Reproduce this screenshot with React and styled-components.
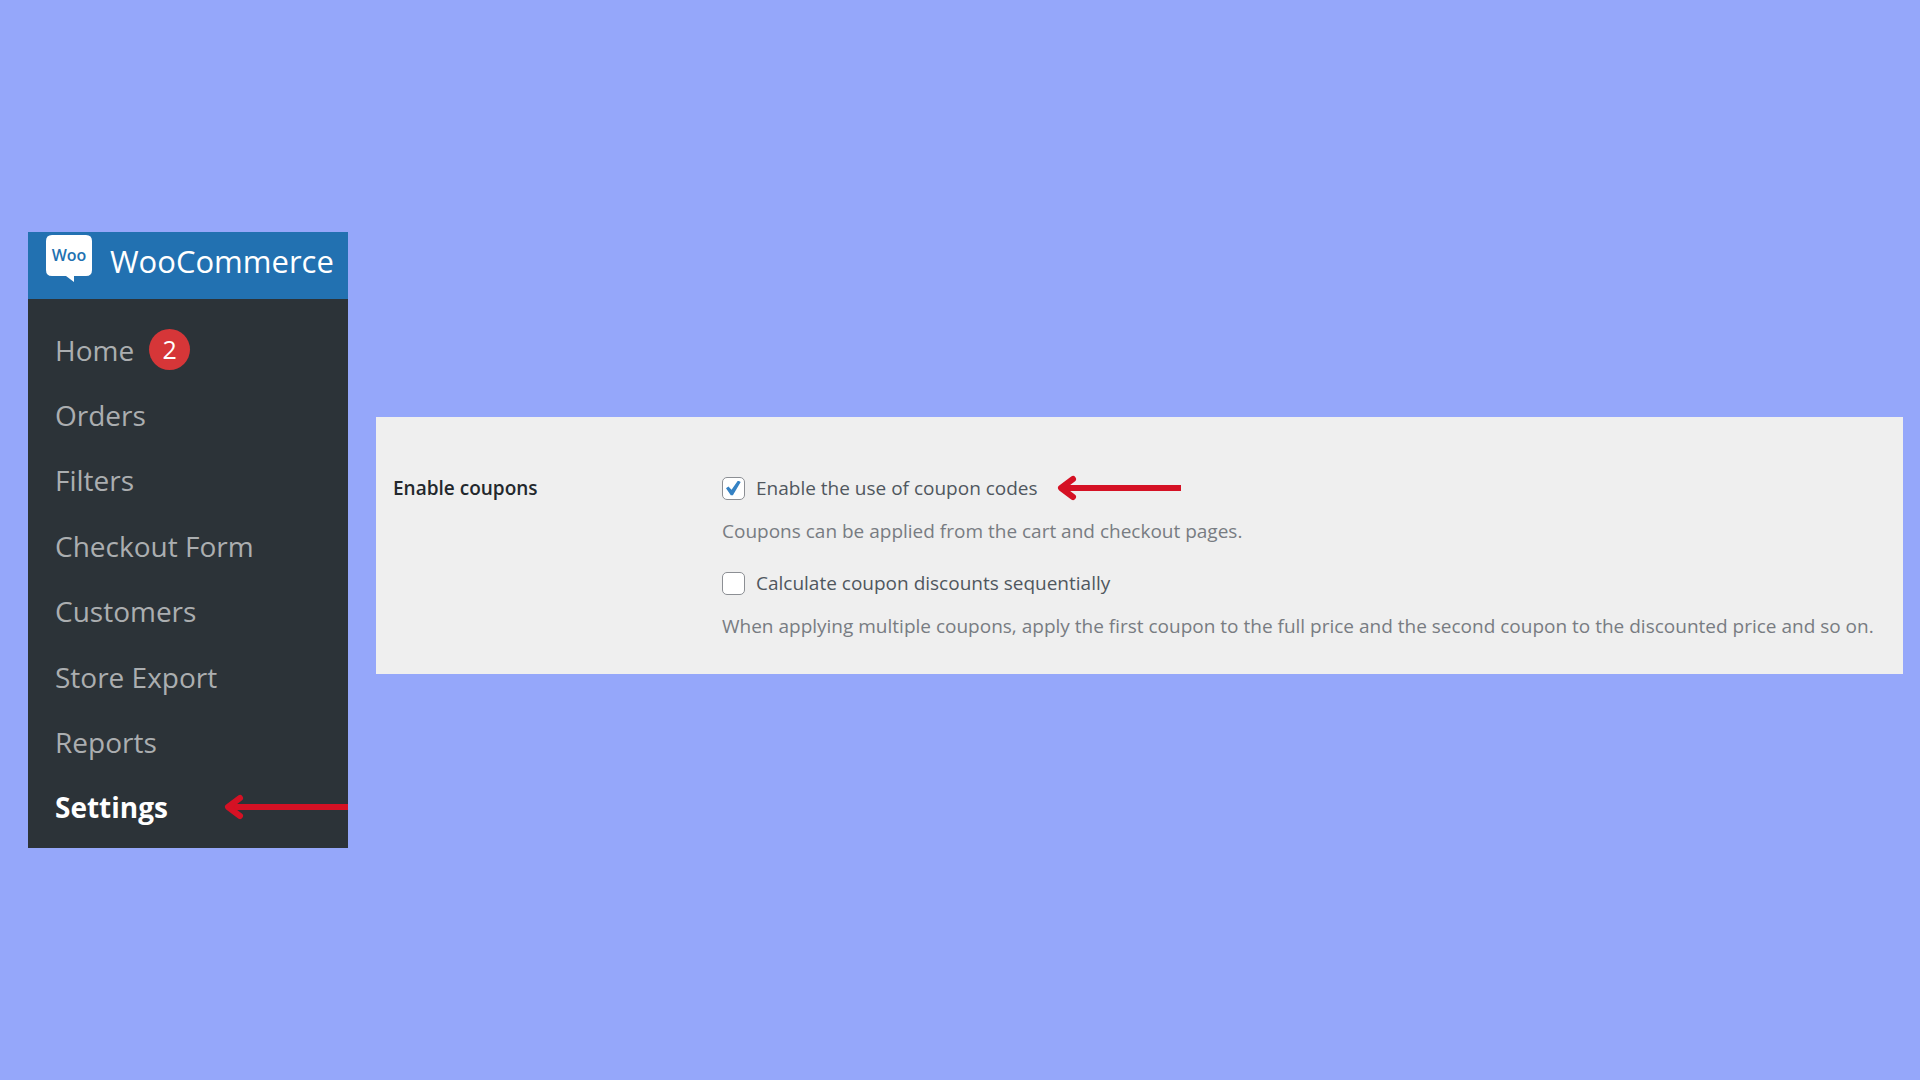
import React from "react";
import styled, { createGlobalStyle } from "styled-components";

const GlobalStyle = createGlobalStyle`
  *, *::before, *::after { box-sizing: border-box; }
  body {
    margin: 0;
    background: #95a7fa;
    font-family: "Segoe UI", "Open Sans", "Noto Sans", sans-serif;
  }
`;

const Page = styled.main`
  min-height: 100vh;
  display: flex;
  align-items: center;
  gap: 28px;
  padding: 0 17px 0 28px;
`;

const Sidebar = styled.nav`
  flex: 0 0 320px;
  display: flex;
  flex-direction: column;
  min-height: 616px;
  background: #2c3338;
`;

const Brand = styled.a`
  display: flex;
  align-items: flex-start;
  gap: 18px;
  height: 67px;
  padding: 3px 0 0 18px;
  background: #2271b1;
  color: #fff;
  font-size: 31px;
  line-height: 52px;
  text-decoration: none;
`;

const Menu = styled.ul`
  flex: 1;
  display: grid;
  grid-auto-rows: 1fr;
  list-style: none;
  margin: 0;
  padding: 18px 0 8px;
`;

const MenuItem = styled.li`
  display: flex;
  align-items: center;
  justify-content: space-between;
  padding-left: 27px;
`;

const MenuLink = styled.a`
  display: flex;
  align-items: center;
  gap: 15px;
  color: ${({ $current }) => ($current ? "#fff" : "#abaeb0")};
  font-size: 28px;
  font-weight: ${({ $current }) => ($current ? 700 : 400)};
  text-decoration: none;
`;

const Badge = styled.span`
  width: 41px;
  height: 41px;
  border-radius: 50%;
  background: #d63638;
  color: #fff;
  font-size: 25px;
  line-height: 41px;
  text-align: center;
`;

const Panel = styled.section`
  flex: 1;
  display: grid;
  grid-template-columns: 312px 1fr;
  gap: 17px;
  margin-top: 11px;
  padding: 57px 17px 34px;
  background: #efefef;
`;

const Heading = styled.h2`
  margin: 0;
  color: #23282d;
  font-size: 19px;
  font-weight: 600;
  line-height: 28px;
`;

const Options = styled.div`
  display: grid;
  gap: 24px;
`;

const OptionRow = styled.div`
  display: flex;
  align-items: center;
  gap: 19px;
`;

const Label = styled.label`
  display: flex;
  align-items: center;
  gap: 11px;
  color: #50575e;
  font-size: 19px;
  line-height: 28px;
`;

const Checkbox = styled.input`
  appearance: none;
  display: grid;
  place-items: center;
  width: 23px;
  height: 23px;
  margin: 0;
  border: 1px solid #8c8f94;
  border-radius: 5px;
  background: #fff;

  &:checked::before {
    content: "";
    width: 15px;
    height: 15px;
    background: #3582c4;
    clip-path: polygon(0 52%, 16% 40%, 37% 62%, 80% 0, 98% 10%, 46% 98%, 32% 98%);
  }
`;

const Description = styled.p`
  margin: 15px 0 0;
  color: #787c82;
  font-size: 19px;
  line-height: 28px;
`;

const WooLogo = () => (
  <svg width="46" height="48" viewBox="0 0 46 48" aria-hidden="true">
    <path
      d="M6 0H40Q46 0 46 6V35Q46 41 40 41H28V47L20 41H6Q0 41 0 35V6Q0 0 6 0Z"
      fill="#fff"
    />
    <text
      x="23"
      y="26"
      textAnchor="middle"
      fontFamily="Open Sans, sans-serif"
      fontSize="16"
      fontWeight="600"
      fill="#2271b1"
    >
      Woo
    </text>
  </svg>
);

const Arrow = () => (
  <svg width="124" height="26" viewBox="0 0 124 26" aria-hidden="true">
    <path d="M5 13H124" fill="none" stroke="#d51124" strokeWidth="6" />
    <path
      d="M16 4L4 13L16 22"
      fill="none"
      stroke="#d51124"
      strokeWidth="6"
      strokeLinecap="round"
      strokeLinejoin="round"
    />
  </svg>
);

const items = [
  { label: "Home", count: 2 },
  { label: "Orders" },
  { label: "Filters" },
  { label: "Checkout Form" },
  { label: "Customers" },
  { label: "Store Export" },
  { label: "Reports" },
  { label: "Settings", current: true },
];

const options = [
  {
    id: "enable-coupons",
    label: "Enable the use of coupon codes",
    description: "Coupons can be applied from the cart and checkout pages.",
    checked: true,
    marked: true,
  },
  {
    id: "calc-sequentially",
    label: "Calculate coupon discounts sequentially",
    description:
      "When applying multiple coupons, apply the first coupon to the full price and the second coupon to the discounted price and so on.",
    checked: false,
  },
];

export default function App() {
  return (
    <>
      <GlobalStyle />
      <Page>
        <Sidebar>
          <Brand href="#woocommerce">
            <WooLogo />
            WooCommerce
          </Brand>
          <Menu>
            {items.map(({ label, count, current }) => (
              <MenuItem key={label}>
                <MenuLink href="#" $current={current}>
                  {label}
                  {count && <Badge>{count}</Badge>}
                </MenuLink>
                {current && <Arrow />}
              </MenuItem>
            ))}
          </Menu>
        </Sidebar>
        <Panel>
          <Heading>Enable coupons</Heading>
          <Options>
            {options.map(({ id, label, description, checked, marked }) => (
              <div key={id}>
                <OptionRow>
                  <Label htmlFor={id}>
                    <Checkbox type="checkbox" id={id} defaultChecked={checked} />
                    {label}
                  </Label>
                  {marked && <Arrow />}
                </OptionRow>
                <Description>{description}</Description>
              </div>
            ))}
          </Options>
        </Panel>
      </Page>
    </>
  );
}
